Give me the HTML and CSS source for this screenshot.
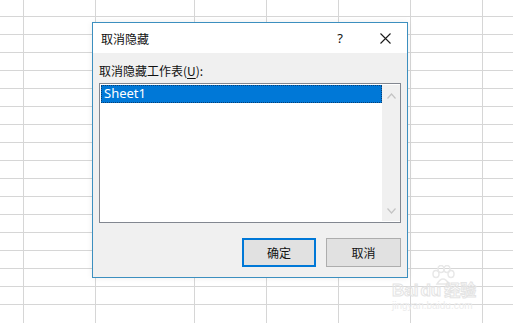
FILE: index.html
```html
<!DOCTYPE html>
<html lang="zh-CN">
<head>
<meta charset="utf-8">
<title>取消隐藏</title>
<link rel="stylesheet" href="styles.css">
</head>
<body>
<div class="sheet">
  <div class="col c0"></div>
  <div class="col c1"></div>
  <div class="col c2"></div>
  <div class="col c3"></div>
  <div class="col c4"></div>
  <div class="col c5"></div>
  <div class="col c6"></div>
  <div class="col c7"></div>
</div>

<div class="dialog">
  <div class="titlebar">
    <span class="title">取消隐藏</span>
    <span class="help">?</span>
    <span class="close">
      <svg width="11" height="11" viewBox="0 0 11 11"><path d="M0.5 0.5 L10.5 10.5 M10.5 0.5 L0.5 10.5" stroke="#1a1a1a" stroke-width="1.1" fill="none"/></svg>
    </span>
  </div>
  <div class="body">
    <div class="label">取消隐藏工作表(<u>U</u>):</div>
    <div class="listbox">
      <div class="items">
        <div class="item selected">Sheet1</div>
      </div>
      <div class="scrollbar">
        <svg width="9" height="6" viewBox="0 0 9 6"><path d="M0.5 5.5 L4.5 1 L8.5 5.5" stroke="#c4c4c4" stroke-width="1.2" fill="none"/></svg>
        <svg width="9" height="6" viewBox="0 0 9 6"><path d="M0.5 0.5 L4.5 5 L8.5 0.5" stroke="#c4c4c4" stroke-width="1.2" fill="none"/></svg>
      </div>
    </div>
    <div class="buttons">
      <button class="btn default">确定</button>
      <button class="btn">取消</button>
    </div>
  </div>
</div>

<div class="watermark">
  <div class="wm-top">
    <svg class="paw" width="26" height="22" viewBox="0 0 26 22">
      <g fill="none" stroke="#e8e8e8" stroke-width="1.5">
        <ellipse cx="6" cy="9" rx="3" ry="3.5"/>
        <ellipse cx="11" cy="4" rx="3" ry="3.5"/>
        <ellipse cx="17" cy="4" rx="3" ry="3.5"/>
        <ellipse cx="21" cy="9" rx="3" ry="3.5"/>
        <path d="M7 19 Q13 9 19 19 Z"/>
      </g>
    </svg>
  </div>
  <div class="wm-main"><span class="wm-bai">Bai</span><span class="wm-du">du</span><span class="wm-jy">经验</span></div>
  <div class="wm-url">jingyan.baidu.com</div>
</div>
</body>
</html>
```

FILE: styles.css
```css
* { box-sizing: border-box; }

html, body {
  margin: 0;
  padding: 0;
  width: 513px;
  height: 323px;
  overflow: hidden;
  background: #ffffff;
  font-family: "Noto Sans CJK SC", "Noto Sans", sans-serif;
}

.sheet {
  display: grid;
  grid-template-columns: 24px 72px 99px 72px 72px 72px 72px 1fr;
  height: 323px;
  background-image: repeating-linear-gradient(to bottom, transparent 0, transparent 17px, #d6d6d6 17px, #d6d6d6 18px);
  background-position: 0 -1px;
}

.col {
  border-right: 1px solid #d6d6d6;
}
.c7 { border-right: none; }

.dialog {
  position: absolute;
  left: 92px;
  top: 22px;
  width: 316px;
  height: 256px;
  border: 1px solid #3c8fbf;
  background: #f0f0f0;
  display: flex;
  flex-direction: column;
  box-shadow: 0 0 6px rgba(0,0,0,0.08);
}

.titlebar {
  height: 30px;
  background: #ffffff;
  display: flex;
  align-items: center;
  padding-left: 8px;
  font-size: 12px;
  color: #111;
}

.title { flex: 1; }

.help {
  width: 20px;
  text-align: center;
  font-family: "Noto Sans", sans-serif;
  font-size: 13px;
  margin-right: 25px;
}

.close {
  display: flex;
  align-items: center;
  justify-content: center;
  width: 20px;
  margin-right: 12px;
}

.body {
  flex: 1;
  display: flex;
  flex-direction: column;
  padding: 9px 6px 9px 6px;
}

.label {
  font-size: 12px;
  color: #111;
  line-height: 17px;
  margin-bottom: 4px;
}

.label u { text-underline-offset: 2px; }

.listbox {
  height: 140px;
  border: 1px solid #828790;
  background: #ffffff;
  display: flex;
  padding: 1px 0 1px 1px;
}

.items {
  flex: 1;
}

.item {
  height: 18px;
  line-height: 15px;
  padding-left: 2px;
  font-family: "Noto Sans", sans-serif;
  font-size: 13px;
  color: #ffffff;
}

.selected {
  background: #0078d7;
  border: 1px dotted #0a3f73;
}

.scrollbar {
  width: 18px;
  background: #f0f0f0;
  display: flex;
  flex-direction: column;
  justify-content: space-between;
  align-items: center;
  padding: 8px 0 7px 0;
}

.buttons {
  display: flex;
  justify-content: flex-end;
  gap: 10px;
  margin-top: 15px;
}

.btn {
  width: 75px;
  height: 29px;
  background: #e1e1e1;
  border: 1px solid #adadad;
  font-family: "Noto Sans CJK SC", sans-serif;
  font-size: 12px;
  color: #111;
  padding: 0;
}

.btn.default {
  width: 74px;
  border: 2px solid #0078d7;
}

.watermark {
  position: absolute;
  left: 392px;
  top: 268px;
  width: 100px;
  pointer-events: none;
}

.wm-top {
  position: absolute;
  left: 38px;
  top: -3px;
}

.wm-main {
  position: absolute;
  top: 9px;
  left: 0;
  font-family: "Liberation Sans", sans-serif;
  font-weight: bold;
  font-size: 17px;
  color: transparent;
  -webkit-text-stroke: 1px #e4e4e4;
  white-space: nowrap;
}

.wm-du { margin-left: 2px; }
.wm-jy { font-family: "Noto Sans CJK SC", sans-serif; margin-left: 3px; font-size: 16px; }

.wm-url {
  position: absolute;
  top: 32px;
  left: 0;
  font-family: "Liberation Sans", sans-serif;
  font-size: 10px;
  color: #ececec;
  white-space: nowrap;
}
```
